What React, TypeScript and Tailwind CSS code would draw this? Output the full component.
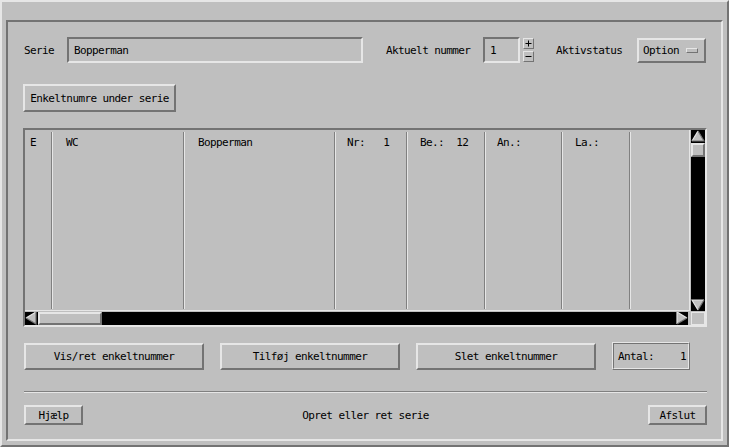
import React from "react";

const font = "font-['DejaVu_Sans_Mono',monospace] text-[11px] leading-[13px] tracking-[-0.6px] text-black";
const raised =
  "border-2 border-t-[#e6e6e6] border-l-[#e6e6e6] border-b-[#737373] border-r-[#737373] bg-[#bfbfbf]";
const sunken =
  "border-2 border-t-[#737373] border-l-[#737373] border-b-[#e6e6e6] border-r-[#e6e6e6]";

function Arrow({ dir }: { dir: "up" | "down" | "left" | "right" }) {
  // Motif-style shaded arrow on the black trough
  const pts = {
    up: { poly: "7,1 13,11 1,11", light: "1,11 7,1", dark: "7,1 13,11 1,11" },
    down: { poly: "1,1 13,1 7,11", light: "7,11 1,1 13,1", dark: "13,1 7,11" },
    left: { poly: "1,6 11,0 11,12", light: "11,0 1,6", dark: "1,6 11,12 11,0" },
    right: { poly: "1,0 11,6 1,12", light: "1,12 1,0 11,6", dark: "11,6 1,12" },
  }[dir];
  const horiz = dir === "left" || dir === "right";
  return (
    <svg
      width={horiz ? 12 : 14}
      height={horiz ? 13 : 12}
      viewBox={horiz ? "0 0 12 13" : "0 0 14 12"}
      className="block shrink-0"
    >
      <polygon points={pts.poly} fill="#bfbfbf" />
      <polyline points={pts.light} fill="none" stroke="#e6e6e6" strokeWidth="1.2" />
      <polyline points={pts.dark} fill="none" stroke="#737373" strokeWidth="1.2" />
    </svg>
  );
}

function Sep() {
  return <div className="w-[2px] shrink-0 mt-[2px] mb-[1px] border-l border-l-[#808080] border-r border-r-[#e6e6e6]" />;
}

function Col({ w, pl, children }: { w?: number; pl: string; children?: React.ReactNode }) {
  return (
    <div
      className={`${pl} pt-[6px] whitespace-pre shrink-0 ${w ? "" : "flex-1"}`}
      style={w ? { width: w } : undefined}
    >
      {children}
    </div>
  );
}

function PushButton({ label, className }: { label: string; className: string }) {
  return (
    <button type="button" className={`${raised} ${className} flex items-center justify-center whitespace-pre`}>
      {label}
    </button>
  );
}

export default function App() {
  return (
    <div
      className={`${font} w-[729px] h-[447px] bg-[#bfbfbf] border-2 border-t-[#e6e6e6] border-l-[#e6e6e6] border-b-[#737373] border-r-[#737373] pl-[4px] pt-[18px] pr-[5px] pb-[4px] flex`}
    >
      <div className={`${sunken} flex-1 flex flex-col pl-[16px] pr-[14px] pt-[15px]`}>
        {/* top row */}
        <div className="flex items-center h-[26px]">
          <div className="w-[43px]">Serie</div>
          <div className={`${sunken} w-[296px] h-[26px] pl-[5px] flex items-center`}>Bopperman</div>
          <div className="w-[120px] pl-[23px]">Aktuelt nummer</div>
          <div className={`${sunken} w-[37px] h-[26px] pl-[5px] flex items-center`}>1</div>
          <div className="ml-[3px] flex flex-col gap-[2px]">
            <div className={`w-[11px] h-[11px] border border-t-[#e6e6e6] border-l-[#e6e6e6] border-b-[#737373] border-r-[#737373] bg-[#bfbfbf] flex items-center justify-center`}>
              <svg width="7" height="7" viewBox="0 0 7 7" className="block">
                <path d="M3.5 0.5V6.5M0.5 3.5H6.5" stroke="#000" strokeWidth="1" />
              </svg>
            </div>
            <div className={`w-[11px] h-[11px] border border-t-[#e6e6e6] border-l-[#e6e6e6] border-b-[#737373] border-r-[#737373] bg-[#bfbfbf] flex items-center justify-center`}>
              <svg width="7" height="7" viewBox="0 0 7 7" className="block">
                <path d="M0.5 3.5H6.5" stroke="#000" strokeWidth="1" />
              </svg>
            </div>
          </div>
          <div className="w-[103px] pl-[22px]">Aktivstatus</div>
          <div className={`${raised} w-[69px] h-[25px] flex items-center justify-between pl-[4px] pr-[6px]`}>
            <span>Option</span>
            <span className="w-[12px] h-[5px] border border-t-[#e6e6e6] border-l-[#e6e6e6] border-b-[#737373] border-r-[#737373]" />
          </div>
        </div>

        {/* series button */}
        <div className="mt-[21px] flex">
          <PushButton label="Enkeltnumre under serie" className="w-[153px] h-[28px] -ml-px" />
        </div>

        {/* scrolled list */}
        <div className={`${sunken} mt-[16px] -ml-px w-[684px] h-[199px] flex flex-col`}>
          <div className="flex h-[181px]">
            <div className="w-[665px] flex border-b border-b-[#e6e6e6] border-r border-r-[#e6e6e6]">
              <Col w={26} pl="pl-[5px]">E</Col>
              <Sep />
              <Col w={130} pl="pl-[13px]">WC</Col>
              <Sep />
              <Col w={149} pl="pl-[13px]">Bopperman</Col>
              <Sep />
              <Col w={70} pl="pl-[11px]">{"Nr:   1"}</Col>
              <Sep />
              <Col w={76} pl="pl-[12px]">{"Be.:  12"}</Col>
              <Sep />
              <Col w={75} pl="pl-[11px]">An.:</Col>
              <Sep />
              <Col w={66} pl="pl-[12px]">La.:</Col>
              <Sep />
              <Col pl="pl-0" />
            </div>
            <div className="ml-[1px] w-[14px] bg-black flex flex-col">
              <Arrow dir="up" />
              <div className={`mt-[1px] h-[14px] w-[14px] border-2 border-t-[#e6e6e6] border-l-[#e6e6e6] border-b-[#737373] border-r-[#737373] bg-[#bfbfbf]`} />
              <div className="flex-1" />
              <Arrow dir="down" />
            </div>
          </div>
          <div className="flex mt-[1px] h-[13px]">
            <div className="w-[663px] bg-black flex">
              <Arrow dir="left" />
              <div className="ml-[1px] w-[64px] h-[13px] border-2 border-t-[#e6e6e6] border-l-[#e6e6e6] border-b-[#737373] border-r-[#737373] bg-[#bfbfbf]" />
              <div className="flex-1" />
              <Arrow dir="right" />
            </div>
            <div className="ml-[3px] w-[14px] h-[13px] border border-[#e6e6e6] bg-[#bfbfbf]" />
          </div>
        </div>

        {/* action buttons */}
        <div className="mt-[15px] h-[28px] flex items-center gap-[16px]">
          <PushButton label="Vis/ret enkeltnummer" className="w-[180px] h-[27px]" />
          <PushButton label="Tilføj enkeltnummer" className="w-[180px] h-[27px]" />
          <PushButton label="Slet enkeltnummer" className="w-[180px] h-[27px]" />
          <div className="w-[78px] h-[28px] border border-t-[#e6e6e6] border-l-[#e6e6e6] border-b-[#737373] border-r-[#737373]">
            <div className="w-full h-full border border-t-[#737373] border-l-[#737373] border-b-[#e6e6e6] border-r-[#e6e6e6] flex items-center justify-between pl-[4px] pr-[2px]">
              <span>Antal:</span>
              <span>1</span>
            </div>
          </div>
        </div>

        {/* separator */}
        <div className="mt-[21px] h-[2px] border-t border-t-[#808080] border-b border-b-[#e6e6e6]" />

        {/* footer */}
        <div className="mt-[12px] h-[20px] flex items-center">
          <PushButton label="Hjælp" className="w-[59px] h-[20px]" />
          <div className="flex-1 text-center">Opret eller ret serie</div>
          <PushButton label="Afslut" className="w-[59px] h-[20px]" />
        </div>
      </div>
    </div>
  );
}
